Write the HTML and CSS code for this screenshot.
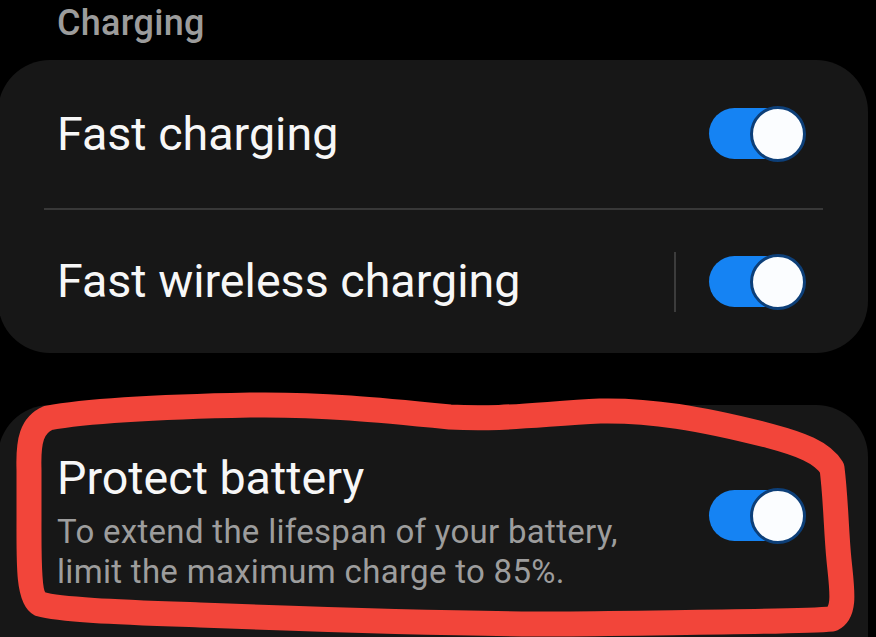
FILE: index.html
```html
<!DOCTYPE html>
<html lang="en">
<head>
<meta charset="utf-8">
<title>Charging</title>
<link rel="stylesheet" href="styles.css">
</head>
<body>
<div class="screen">
  <div class="header">Charging</div>
  <div class="card">
    <div class="row row-first">
      <span class="title">Fast charging</span>
      <div class="toggle"><span class="track"></span><span class="thumb"></span></div>
    </div>
    <div class="divider"></div>
    <div class="row row-second">
      <span class="title">Fast wireless charging</span>
      <div class="right">
        <span class="vsep"></span>
        <div class="toggle"><span class="track"></span><span class="thumb"></span></div>
      </div>
    </div>
  </div>
  <div class="card card-protect">
    <div class="row row-protect">
      <div class="text">
        <div class="title">Protect battery</div>
        <div class="sub">To extend the lifespan of your battery,<br>limit the maximum charge to 85%.</div>
      </div>
      <div class="toggle toggle-protect"><span class="track"></span><span class="thumb"></span></div>
    </div>
  </div>
  <svg class="scribble" viewBox="0 0 876 637" width="876" height="637">
    <path d="M29 470 C28 440 32 425 48 418 C80 412 150 407 250 405 C320 404 380 410 450 417 C500 420 540 414 600 411 C650 410 700 418 770 436 C800 444 822 452 832 468 C836 500 836 530 839 560 C842 590 846 612 832 619 C800 622 700 622 560 624 C450 624 330 620 200 615 C120 612 60 610 40 604 C28 598 29 560 29 520 Z"
      fill="none" stroke="#f2453a" stroke-width="25" stroke-linejoin="round" stroke-linecap="round"/>
  </svg>
</div>
</body>
</html>
```
FILE: styles.css
```css
html, body {
  margin: 0;
  padding: 0;
  background: #000;
}
body {
  font-family: Roboto, "Noto Sans", sans-serif;
  overflow: hidden;
}
.screen {
  position: relative;
  width: 876px;
  height: 637px;
  overflow: hidden;
  background: #000;
}
.header {
  padding: 5px 0 0 57px;
  height: 36px;
  line-height: 36px;
  font-size: 36px;
  font-weight: 500;
  letter-spacing: 0.3px;
  color: #9c9c9c;
  margin-bottom: 19px;
}
.card {
  margin-left: -2px;
  width: 870px;
  background: #171717;
  border-radius: 52px;
  box-sizing: border-box;
  padding: 0 62px 0 59px;
}
.row {
  display: flex;
  align-items: center;
  justify-content: space-between;
}
.row-first {
  height: 148px;
}
.row-second {
  height: 143px;
}
.title {
  font-size: 46.6px;
  line-height: 47px;
  color: #f7f7f7;
}
.divider {
  height: 2px;
  background: #383838;
  margin: 0 -17px 0 -13px;
}
.right {
  display: flex;
  align-items: center;
  gap: 33px;
}
.vsep {
  width: 2px;
  height: 60px;
  background: #3c3c3c;
}
.toggle {
  position: relative;
  width: 97px;
  height: 56px;
}
.track {
  position: absolute;
  left: 0;
  top: 2px;
  width: 90px;
  height: 51px;
  border-radius: 26px;
  background: #1583f3;
}
.thumb {
  position: absolute;
  right: 0;
  top: 0;
  width: 50px;
  height: 50px;
  border-radius: 50%;
  background: #fbfdff;
  border: 3px solid #0d3f78;
}
.card-protect {
  margin-top: 52px;
  height: 260px;
  padding-top: 50px;
  border-radius: 52px 52px 0 0;
}
.row-protect {
  align-items: flex-start;
}
.row-protect .title {
  display: block;
}
.sub {
  margin-top: 10px;
  font-size: 33px;
  line-height: 40px;
  letter-spacing: 0.3px;
  color: #9d9d9d;
}
.toggle-protect {
  margin-top: 33px;
}
.scribble {
  position: absolute;
  left: 0;
  top: 0;
  pointer-events: none;
}
```
